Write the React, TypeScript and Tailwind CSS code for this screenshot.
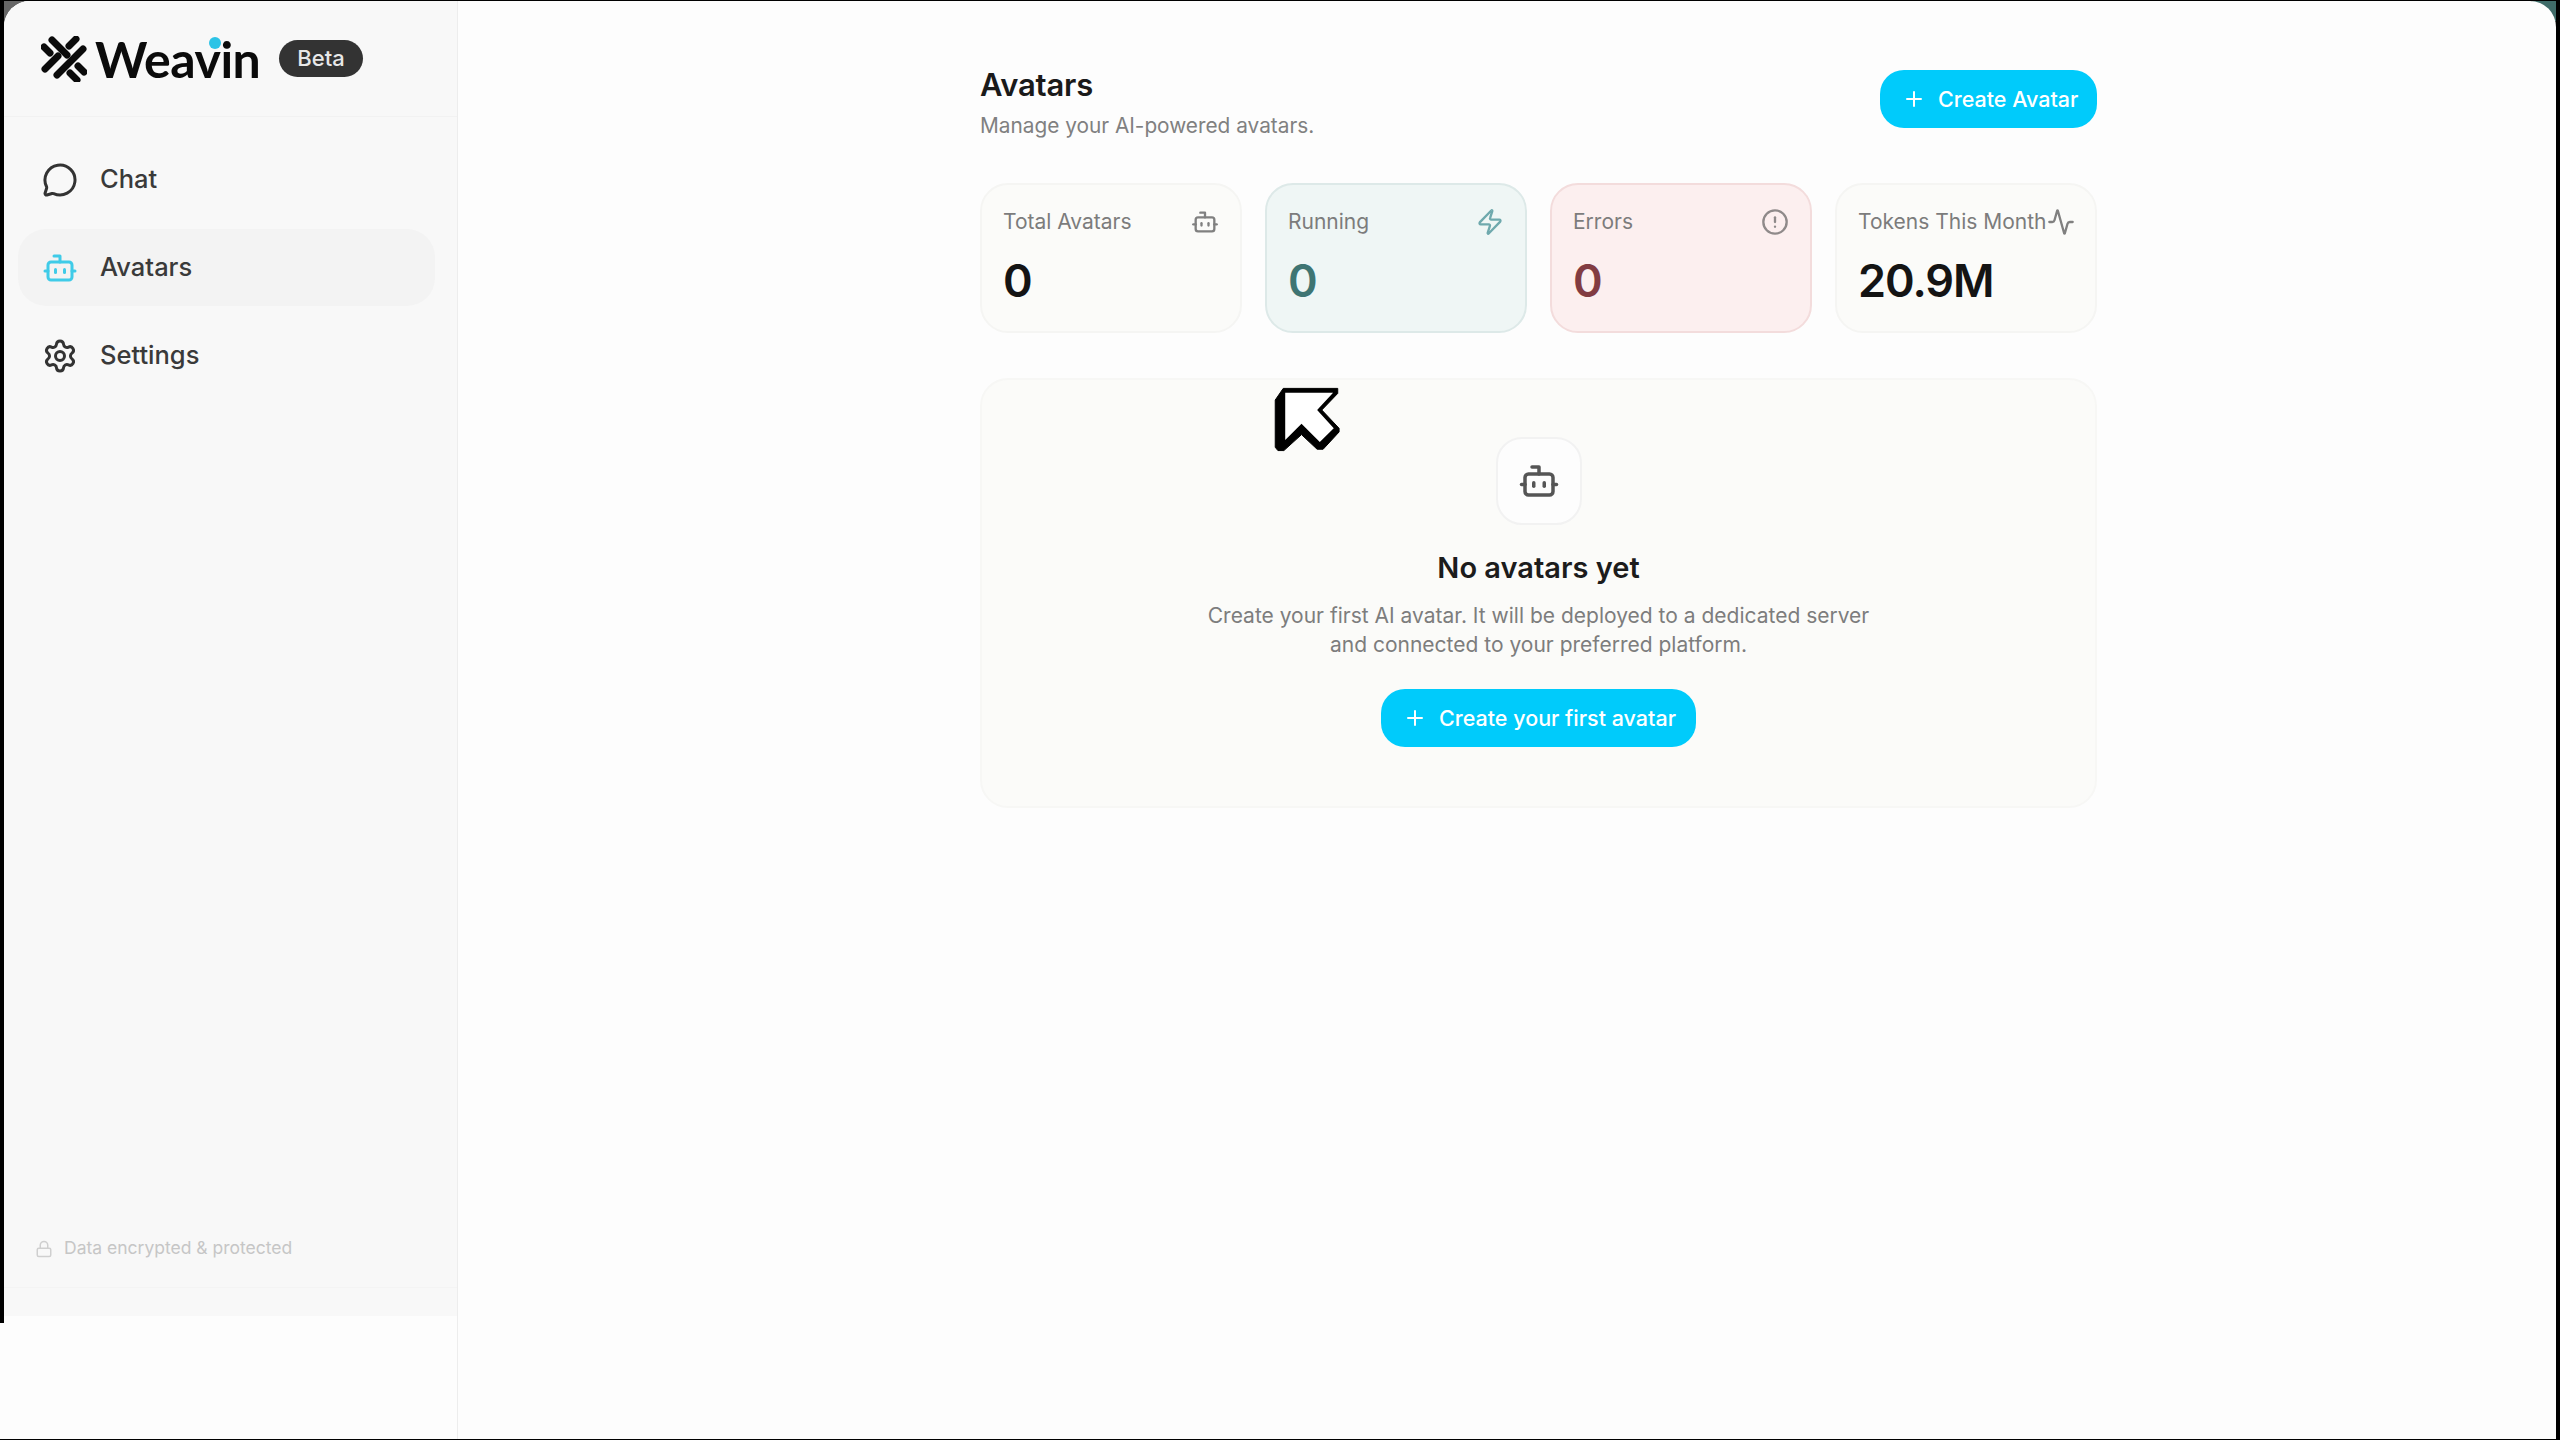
import React from 'react';
import { Activity, Bot, CircleAlert, Lock, MessageCircle, Plus, Settings, Zap } from 'lucide-react';

const font = { fontFamily: 'Inter, "Noto Sans", sans-serif' };

const WeavinMark = () => (
  <svg viewBox="0 0 46 46" className="w-[46px] h-[46px] shrink-0" stroke="#0b0b0b" strokeWidth="7" strokeLinecap="round" fill="none">
    <path d="M11 4 L26 19 M37 30 L43 36" />
    <path d="M3 11 L9 17 M29 37 L36 44" />
    <path d="M35 3 L28 10 M17 20 L4 33" />
    <path d="M42 13 L16 39" />
  </svg>
);

const Cursor = () => (
  <svg viewBox="0 0 391 270" className="w-[130px] h-[90px]">
    <path d="M106 90 L130 55 L294 55 L294 70 L246 120 L298 175 L298 186 L250 238 L232 238 L185 194 L132 242 L114 242 L106 232 Z" fill="#000" stroke="#000" strokeWidth="3" strokeLinejoin="round" />
    <path d="M136 68 L280 68 L232 120 L282 175 L240 216 L185 161 L136 210 Z" fill="#fff" />
  </svg>
);

const stats = [
  { label: 'Total Avatars', value: '0', icon: Bot, card: 'bg-[#fbfbf9] border-[#f5f5f3]', num: 'text-[#141414]', ic: 'text-[#808080]' },
  { label: 'Running', value: '0', icon: Zap, card: 'bg-[#eff6f5] border-[#dde9e8]', num: 'text-[#3f7573]', ic: 'text-[#6fa9ad]' },
  { label: 'Errors', value: '0', icon: CircleAlert, card: 'bg-[#fcefef] border-[#f3dcdc]', num: 'text-[#823c42]', ic: 'text-[#8f8a8a]' },
  { label: 'Tokens This Month', value: '20.9M', icon: Activity, card: 'bg-[#fbfbf9] border-[#f5f5f3]', num: 'text-[#141414]', ic: 'text-[#808080]' },
];

const nav = [
  { label: 'Chat', icon: MessageCircle, active: false },
  { label: 'Avatars', icon: Bot, active: true },
  { label: 'Settings', icon: Settings, active: false },
];

export default function App() {
  return (
    <div className="relative flex h-screen bg-black pt-px pb-px pr-1 overflow-hidden" style={font}>
      {/* left edge of the recording */}
      <div className="w-1 shrink-0 flex flex-col">
        <div className="h-[1322px] bg-black" />
        <div className="flex-1 bg-[#fdfdfd]" />
      </div>

      <div className="absolute left-1 top-px w-6 h-5 bg-[#666666]" />
      <div className="absolute right-1 top-px w-6 h-5 bg-[#3f6b68]" />

      <div className="relative flex flex-1 min-w-0 rounded-t-[26px] overflow-hidden bg-[#fdfdfd]">
        {/* Sidebar */}
        <aside className="w-[454px] shrink-0 flex flex-col bg-[#fdfdfd] border-r border-[#ededed]">
          <div className="h-[1315px] flex flex-col bg-[#f8f8f8]">
            <div className="h-[116px] shrink-0 flex items-center pl-[37px] border-b border-[#f2f2f2]">
              <WeavinMark />
              <span className="relative ml-[8px] text-[50px] leading-none font-bold text-[#0b0b0b] tracking-[-0.5px]" style={{ fontFamily: 'Lato, Inter, sans-serif' }}>
                Weavin
                <span className="absolute left-[114px] top-[3px] w-[12px] h-[12px] rounded-full bg-[#2cc3e6]" />
              </span>
              <span className="ml-[19px] h-[37px] px-[18px] flex items-center rounded-full bg-[#333333] text-[#e8e8e8] text-[22px] font-medium">Beta</span>
            </div>

            <nav className="flex flex-col gap-[11px] pt-[24px] px-[14px]">
              {nav.map(item => (
                <div key={item.label} className={`h-[77px] flex items-center gap-[22px] pl-[24px] rounded-[28px] w-[417px] ${item.active ? 'bg-[#f3f3f3]' : ''}`}>
                  <item.icon className={`w-[36px] h-[36px] ${item.active ? 'text-[#3fcbe8]' : 'text-[#333333]'}`} strokeWidth={2} />
                  <span className="text-[25.5px] font-medium text-[#3a3a3a]">{item.label}</span>
                </div>
              ))}
            </nav>

            <div className="mt-auto h-[120px] flex flex-col">
              <div className="h-[92px] flex items-center gap-[11px] pl-[31px] pt-[14px] border-b border-[#f4f4f4]">
                <Lock className="w-[18px] h-[18px] text-[#cfcfcf]" />
                <span className="text-[17.5px] text-[#c6c6c6]">Data encrypted &amp; protected</span>
              </div>
            </div>
          </div>
        </aside>

        {/* Main */}
        <main className="flex-1 min-w-0 pl-[522px]">
          <div className="w-[1117px]">
            <div className="flex items-start justify-between pt-[69px]">
              <div className="-mt-[4px]">
                <h1 className="text-[31px] leading-[38px] font-semibold text-[#1a1a1a] tracking-[-0.2px]">Avatars</h1>
                <p className="mt-[8px] text-[20.8px] leading-[28px] text-[#808080]">Manage your AI-powered avatars.</p>
              </div>
              <button className="h-[58px] w-[217px] flex items-center gap-[12px] pl-[22px] rounded-[24px] bg-[#00cbfb] text-white text-[21.5px] font-medium">
                <Plus className="w-[24px] h-[24px]" />
                Create Avatar
              </button>
            </div>

            <div className="grid grid-cols-4 gap-[23px] mt-[43px]">
              {stats.map(s => (
                <div key={s.label} className={`h-[150px] rounded-[28px] border-2 pl-[21px] pr-[21px] pt-[23px] ${s.card}`}>
                  <div className="flex items-center justify-between">
                    <span className="text-[21px] leading-[28px] text-[#7c7c7c] whitespace-nowrap">{s.label}</span>
                    <s.icon className={`w-[28px] h-[28px] shrink-0 ${s.ic}`} strokeWidth={2} />
                  </div>
                  <div className={`mt-[16px] text-[45px] leading-[58px] font-semibold tracking-[-1px] ${s.num}`}>{s.value}</div>
                </div>
              ))}
            </div>

            <div className="mt-[45px] h-[430px] rounded-[28px] border-2 border-[#f7f7f5] bg-[#fbfbf9] flex flex-col items-center pt-[57px]">
              <div className="w-[86px] h-[88px] rounded-[26px] border-2 border-[#f2f2f2] bg-[#fdfdfd] flex items-center justify-center">
                <Bot className="w-[42px] h-[42px] text-[#555555]" strokeWidth={2} />
              </div>
              <h2 className="mt-[24px] text-[29px] leading-[38px] font-semibold text-[#1c1c1c]">No avatars yet</h2>
              <p className="mt-[14px] text-[21px] leading-[29px] text-[#7d7d7d] text-center w-[720px]">
                Create your first AI avatar. It will be deployed to a dedicated server<br />and connected to your preferred platform.
              </p>
              <button className="mt-[30px] h-[58px] w-[315px] flex items-center gap-[12px] pl-[22px] rounded-[24px] bg-[#00cbfb] text-white text-[21.5px] font-medium">
                <Plus className="w-[24px] h-[24px]" />
                Create your first avatar
              </button>
            </div>
          </div>
        </main>
      </div>

      {/* recorded pointer */}
      <div className="absolute left-[1240px] top-[370px]">
        <Cursor />
      </div>
    </div>
  );
}
